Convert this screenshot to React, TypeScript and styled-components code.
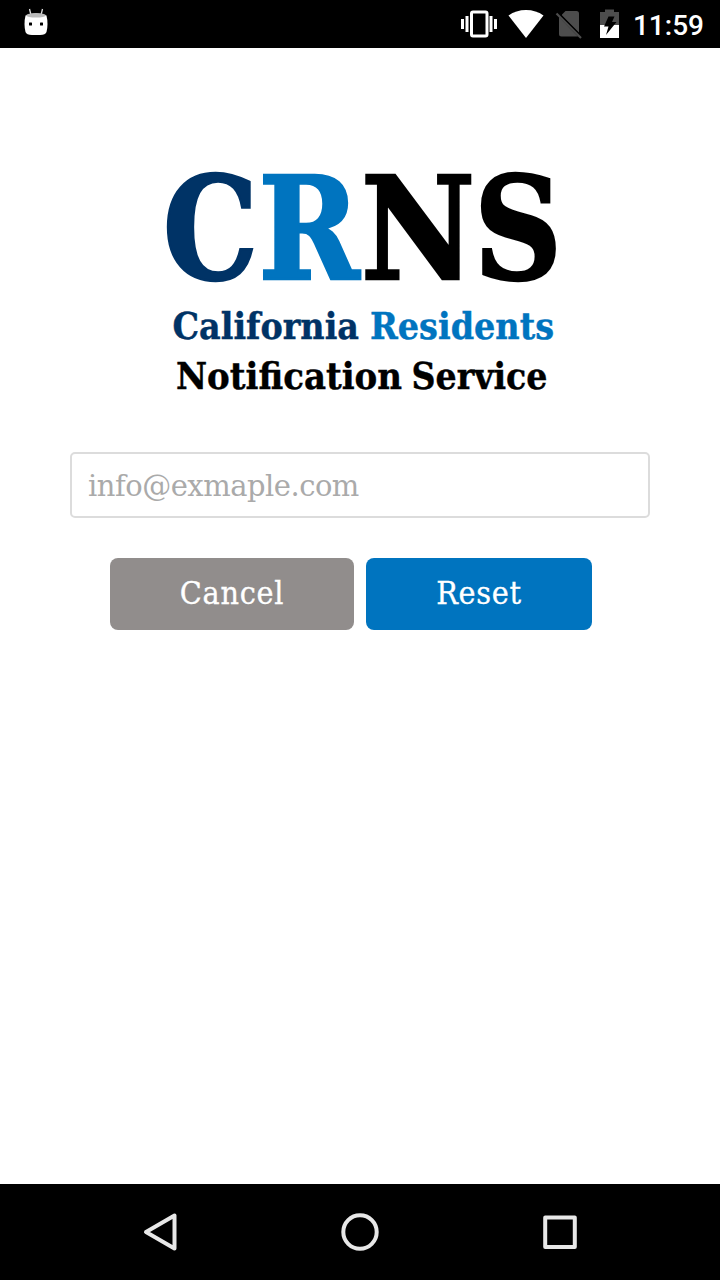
import React from 'react';
import styled, { createGlobalStyle } from 'styled-components';

const GlobalStyle = createGlobalStyle`
  * { box-sizing: border-box; }
  body { margin: 0; background: #fff; }
`;

const Screen = styled.div`
  display: flex;
  flex-direction: column;
  width: 720px;
  height: 1280px;
  background: #fff;
  overflow: hidden;
`;

const StatusBar = styled.header`
  display: flex;
  align-items: center;
  justify-content: space-between;
  height: 48px;
  background: #000;
  padding: 0 16px 0 20px;
`;

const StatusIcons = styled.div`
  display: flex;
  align-items: center;
`;

const StatusIcon = styled.svg<{ $gap?: number }>`
  display: block;
  height: 48px;
  margin-right: ${({ $gap = 0 }) => $gap}px;
`;

const Clock = styled.time`
  font: 500 28px/48px Roboto, sans-serif;
  color: #fff;
  padding-top: 3px;
`;

const Content = styled.main`
  flex: 1;
  display: flex;
  flex-direction: column;
  padding: 72px 70px 0;
`;

const Logo = styled.svg`
  display: block;
  width: 440px;
  height: 290px;
  margin-left: 70px;
  font-family: 'DejaVu Serif', serif;
  font-stretch: condensed;
  font-weight: 700;
`;

const EmailInput = styled.input`
  height: 66px;
  margin-top: 42px;
  padding: 1px 16px 0;
  border: 2px solid #dcdcdc;
  border-radius: 5px;
  background: #fff;
  font-family: 'DejaVu Serif', serif;
  font-size: 29px;
  letter-spacing: -0.5px;
  outline: none;
  &::placeholder { color: #aaa; opacity: 1; }
`;

const Actions = styled.div`
  display: flex;
  gap: 12px;
  margin: 40px 0 0 40px;
`;

const Button = styled.button<{ $color: string; $width: number }>`
  width: ${({ $width }) => $width}px;
  height: 72px;
  padding: 0 0 3px;
  border: 0;
  border-radius: 8px;
  background: ${({ $color }) => $color};
  color: #fff;
  font-family: 'DejaVu Serif', serif;
  font-stretch: condensed;
  font-size: 32px;
  letter-spacing: 0.7px;
  -webkit-text-stroke: 0.3px #fff;
`;

const NavBar = styled.nav`
  display: flex;
  align-items: center;
  justify-content: center;
  gap: 152px;
  height: 96px;
  background: #000;
`;

const NavIcon = styled.svg`
  width: 48px;
  height: 48px;
  fill: none;
  stroke: #e8e8e8;
  stroke-width: 4;
  stroke-linejoin: round;
`;

type WordProps = {
  x: number;
  y: number;
  size: number;
  width: number;
  color: string;
  weight?: number;
  children: string;
};

const Word = ({ x, y, size, width, color, weight = 0, children }: WordProps) => (
  <text
    x={x}
    y={y}
    fontSize={size}
    textLength={width}
    lengthAdjust="spacingAndGlyphs"
    fill={color}
    stroke={color}
    strokeWidth={weight}
  >
    {children}
  </text>
);

export default function App() {
  return (
    <>
      <GlobalStyle />
      <Screen>
        <StatusBar>
          <StatusIcon width="32" viewBox="0 0 32 48">
            <path d="M9.500 9L11 15M22.500 9L21 15" stroke="#ddd" strokeWidth="1.300" />
            <path d="M5.500 15.500Q16 11.500 26.500 15.500Q28.500 24 26.500 32Q25.500 35 20 35H12Q6.500 35 5.500 32Q3.500 24 5.500 15.500Z" fill="#fff" />
            <ellipse cx="16" cy="15.300" rx="9.800" ry="2.300" fill="#bbb" />
            <rect x="9" y="22.500" width="3" height="3" rx="0.500" />
            <rect x="20" y="22.500" width="3" height="3" rx="0.500" />
          </StatusIcon>
          <StatusIcons>
            <StatusIcon width="36" viewBox="0 0 36 48" $gap={11}>
              <path d="M0 19H3V29H0ZM4.500 16H7.500V32H4.500ZM28.500 16H31.500V32H28.500ZM33 19H36V29H33Z" fill="#fff" />
              <rect x="10.500" y="12" width="15.500" height="24" rx="1.500" fill="none" stroke="#fff" strokeWidth="3" />
            </StatusIcon>
            <StatusIcon width="36" viewBox="0 0 36 48" $gap={11}>
              <path d="M0.500 15.500Q8 10 18 10Q28 10 35.500 15.500L18 38Z" fill="#fff" />
            </StatusIcon>
            <StatusIcon width="27" viewBox="0 0 27 48" $gap={18}>
              <path d="M10.500 11H21.500Q24 11 24 13.500V33L7 15.500V14.500ZM4 17L23 36.500H6.500Q4 36.500 4 34Z" fill="#4d4d4d" />
              <path d="M3 13L25 35" stroke="#000" strokeWidth="2" />
              <path d="M1.500 13.500L26 38" stroke="#4d4d4d" strokeWidth="2.200" />
            </StatusIcon>
            <StatusIcon width="20" viewBox="0 0 20 48" $gap={13}>
              <path d="M5 9.500H14V12H19V25H0V12H5Z" fill="#4d4d4d" />
              <path d="M0 25H19V38H0Z" fill="#fff" />
              <path d="M8.500 16.500H14.500L12 22H16.500L6 35L8.500 26.500H4Z" fill="#000" />
            </StatusIcon>
            <Clock>11:59</Clock>
          </StatusIcons>
        </StatusBar>
        <Content>
          <Logo viewBox="140 120 440 290" role="img" aria-label="CRNS">
            <Word x={163} y={279} size={143} width={95} color="#003366" weight={2.5}>C</Word>
            <Word x={258.5} y={279} size={143} width={101} color="#0074bf" weight={2.5}>R</Word>
            <Word x={361} y={279} size={143} width={114} color="#000" weight={2.5}>N</Word>
            <Word x={474} y={279} size={143} width={88} color="#000" weight={2.5}>S</Word>
            <Word x={172.5} y={339} size={37.5} width={186.5} color="#003366" weight={0.4}>California</Word>
            <Word x={370} y={339} size={37.5} width={184} color="#0074bf" weight={0.4}>Residents</Word>
            <Word x={176} y={389} size={37.5} width={226} color="#000" weight={0.4}>Notification</Word>
            <Word x={411.5} y={389} size={37.5} width={136} color="#000" weight={0.4}>Service</Word>
          </Logo>
          <EmailInput type="email" placeholder="info@exmaple.com" />
          <Actions>
            <Button $color="#918d8c" $width={244}>Cancel</Button>
            <Button $color="#0074bf" $width={226}>Reset</Button>
          </Actions>
        </Content>
        <NavBar>
          <NavIcon viewBox="0 0 48 48"><path d="M10 24L38.500 7.500V40.500Z" /></NavIcon>
          <NavIcon viewBox="0 0 48 48"><circle cx="24" cy="24" r="16.700" /></NavIcon>
          <NavIcon viewBox="0 0 48 48"><rect x="9.200" y="9.500" width="29.600" height="29.500" /></NavIcon>
        </NavBar>
      </Screen>
    </>
  );
}
